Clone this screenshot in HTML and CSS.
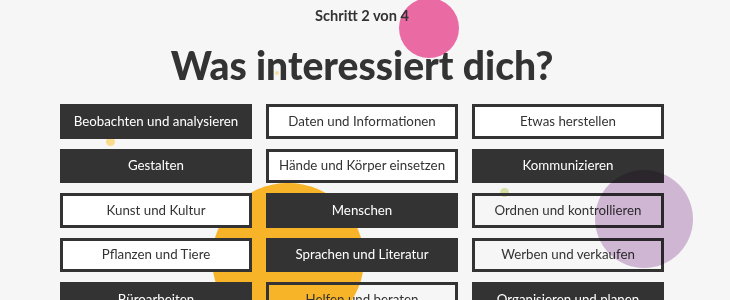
FILE: index.html
```html
<!DOCTYPE html>
<html lang="de">
<head>
<meta charset="utf-8">
<title>Was interessiert dich?</title>
<link rel="stylesheet" href="styles.css">
</head>
<body>
<div class="page">
  <div class="deco">
    <span class="blob blob-pink"></span>
    <span class="blob blob-yellow"></span>
    <span class="dot dot-yellow"></span>
    <span class="dot dot-green"></span>
    <span class="dot dot-tiny"></span>
  </div>
  <main class="content">
    <p class="step">Schritt 2 von 4</p>
    <h1 class="title">Was interessiert dich?</h1>
    <div class="options">
      <button class="opt opt-on">Beobachten und analysieren</button>
      <button class="opt">Daten und Informationen</button>
      <button class="opt">Etwas herstellen</button>
      <button class="opt opt-on">Gestalten</button>
      <button class="opt">Hände und Körper einsetzen</button>
      <button class="opt opt-on">Kommunizieren</button>
      <button class="opt">Kunst und Kultur</button>
      <button class="opt opt-on">Menschen</button>
      <button class="opt opt-clear">Ordnen und kontrollieren</button>
      <button class="opt">Pflanzen und Tiere</button>
      <button class="opt opt-on">Sprachen und Literatur</button>
      <button class="opt opt-clear">Werben und verkaufen</button>
      <button class="opt opt-on">Büroarbeiten</button>
      <button class="opt opt-clear">Helfen und beraten</button>
      <button class="opt opt-on">Organisieren und planen</button>
    </div>
  </main>
  <span class="blob blob-purple"></span>
</div>
</body>
</html>
```

FILE: styles.css
```css
html, body {
  margin: 0;
  padding: 0;
  background: #f6f6f6;
  overflow: hidden;
}

body {
  font-family: Lato, "Open Sans", sans-serif;
  color: #333333;
}

.page {
  position: relative;
  width: 730px;
  height: 300px;
  overflow: hidden;
}

.deco {
  position: absolute;
  inset: 0;
  z-index: 0;
}

.blob, .dot {
  position: absolute;
  border-radius: 50%;
  display: block;
}

.blob-pink {
  left: 399px;
  top: -2px;
  width: 60px;
  height: 60px;
  background: #ea6ba4;
}

.blob-yellow {
  left: 212px;
  top: 183px;
  width: 152px;
  height: 152px;
  background: #f8b428;
}

.blob-purple {
  left: 595px;
  top: 170px;
  width: 98px;
  height: 98px;
  background: #d7bedc;
  mix-blend-mode: multiply;
  z-index: 2;
}

.dot-yellow {
  left: 106px;
  top: 137px;
  width: 9px;
  height: 9px;
  background: #f8dc8c;
}

.dot-green {
  left: 500px;
  top: 188px;
  width: 9px;
  height: 9px;
  background: #d5e1a4;
}

.dot-tiny {
  left: 275px;
  top: 71px;
  width: 4px;
  height: 4px;
  background: #f4e29c;
}

.content {
  position: relative;
  z-index: 1;
  display: flex;
  flex-direction: column;
  align-items: center;
  padding: 7px 6px 0 0;
}

.step {
  margin: 0;
  font-size: 14.6px;
  font-weight: 700;
  line-height: 18px;
}

.title {
  margin: 17px 0 0;
  font-size: 39px;
  font-weight: 900;
  line-height: 46px;
}

.options {
  margin-top: 16px;
  display: grid;
  grid-template-columns: repeat(3, 192px);
  grid-auto-rows: 34.5px;
  column-gap: 14px;
  row-gap: 10px;
}

.opt {
  box-sizing: border-box;
  border: 3px solid #333333;
  background: #ffffff;
  color: #333333;
  font-family: Lato, "Open Sans", sans-serif;
  font-size: 13.3px;
  padding: 0 0 1px;
  margin: 0;
}

.opt-on {
  background: #333333;
  color: #ffffff;
}

.opt-clear {
  background: transparent;
}
```
